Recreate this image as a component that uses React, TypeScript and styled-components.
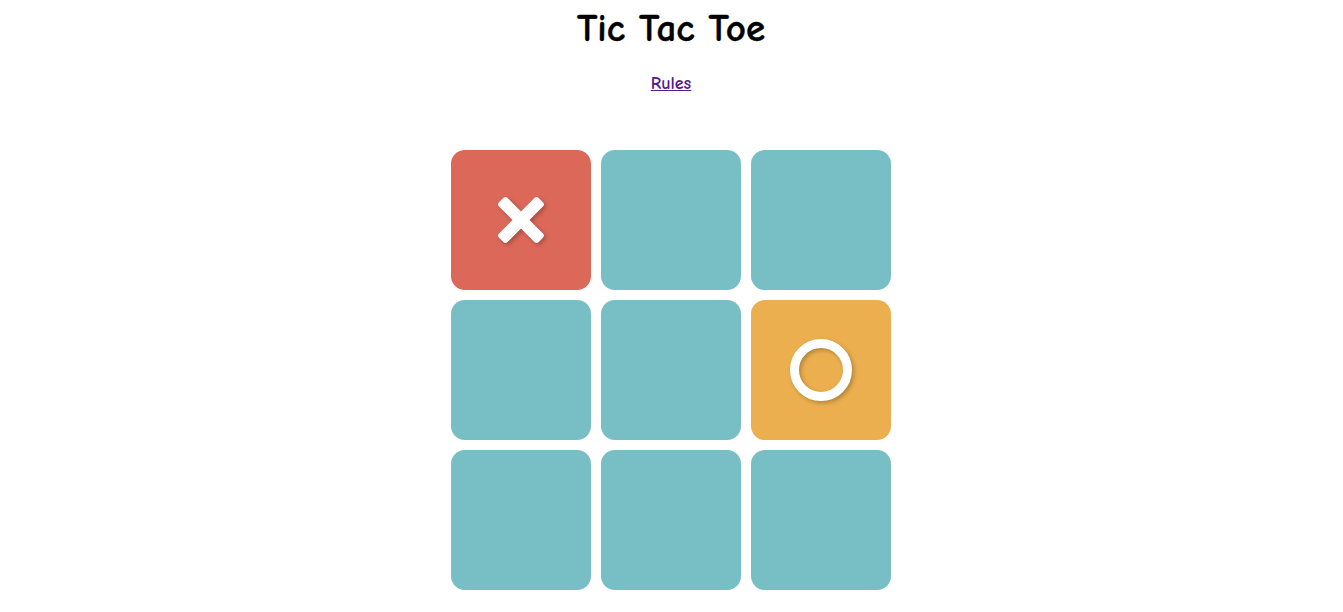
import React from "react";
import styled, { createGlobalStyle } from "styled-components";

const Global = createGlobalStyle`
  html, body { margin: 0; padding: 0; background: #fff; }
  body { font-family: "Comic Sans MS", "Comic Neue", "Open Sans", sans-serif; }
`;

const Page = styled.div`
  display: flex;
  flex-direction: column;
  align-items: center;
  padding-top: 6px;
  padding-right: 1px;
`;

const Title = styled.h1`
  margin: 0;
  font-size: 39px;
  font-weight: 700;
  line-height: 46px;
  color: #000;
  -webkit-text-stroke: 0.4px #000;
`;

const RulesLink = styled.a`
  margin-top: 22px;
  font-size: 18px;
  font-weight: 700;
  line-height: 20px;
  color: #551a8b;
  text-decoration: underline;
`;

const Board = styled.div`
  margin-top: 56px;
  display: grid;
  grid-template-columns: repeat(3, 140px);
  grid-auto-rows: 140px;
  gap: 10px;
`;

const Cell = styled.div<{ $kind: "x" | "o" | "empty" }>`
  border-radius: 14px;
  display: flex;
  align-items: center;
  justify-content: center;
  background: ${(p) =>
    p.$kind === "x" ? "#dc685a" : p.$kind === "o" ? "#ecaf4f" : "#78bec5"};
`;

const Mark = styled.svg`
  overflow: visible;
  filter: drop-shadow(2px 2px 2px rgba(0, 0, 0, 0.25));
`;

const XMark = () => (
  <Mark width="50" height="50" viewBox="0 0 50 50">
    <g transform="rotate(45 25 25)" fill="#fff">
      <rect x="-3" y="19" width="56" height="12" rx="3" />
      <rect x="19" y="-3" width="12" height="56" rx="3" />
    </g>
  </Mark>
);

const OMark = () => (
  <Mark width="64" height="64" viewBox="0 0 64 64">
    <circle cx="32" cy="32" r="26.5" fill="none" stroke="#fff" strokeWidth="9" />
  </Mark>
);

const cells: ("x" | "o" | "empty")[] = [
  "x", "empty", "empty",
  "empty", "empty", "o",
  "empty", "empty", "empty",
];

export default function App() {
  return (
    <>
      <Global />
      <Page>
        <Title>Tic Tac Toe</Title>
        <RulesLink href="#rules">Rules</RulesLink>
        <Board>
          {cells.map((c, i) => (
            <Cell key={i} $kind={c}>
              {c === "x" && <XMark />}
              {c === "o" && <OMark />}
            </Cell>
          ))}
        </Board>
      </Page>
    </>
  );
}
